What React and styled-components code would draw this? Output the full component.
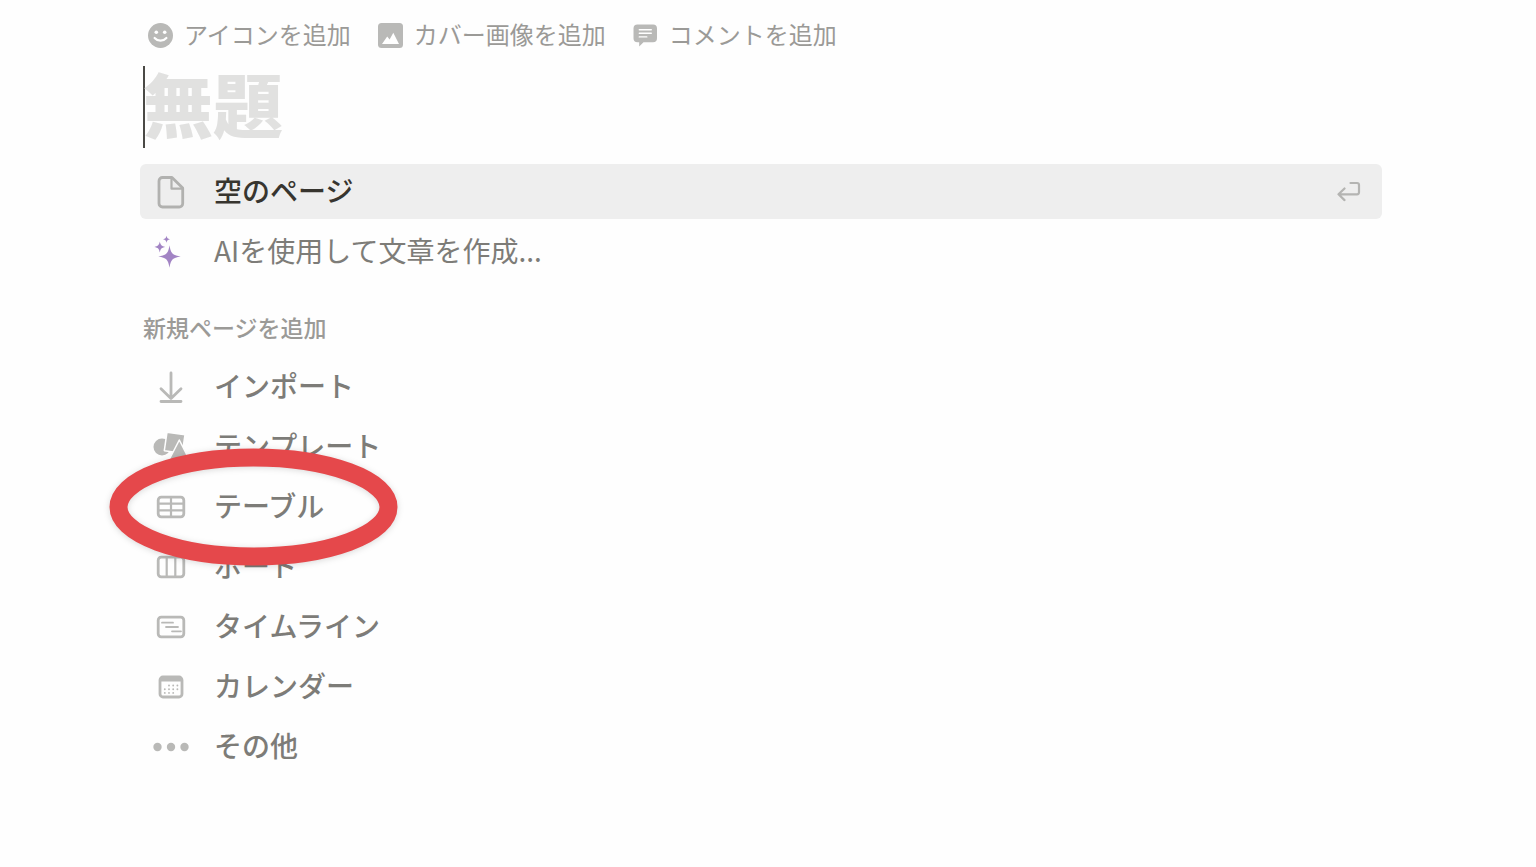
import React from 'react';
import styled, { createGlobalStyle } from 'styled-components';

const GlobalStyle = createGlobalStyle`
    * {
        box-sizing: border-box;
    }
    body {
        margin: 0;
        background: #fefefe;
        font-family: 'Noto Sans CJK JP', 'Noto Sans', sans-serif;
    }
    button {
        border: 0;
        margin: 0;
        background: none;
        font-family: inherit;
        text-align: left;
        cursor: pointer;
    }
    svg {
        display: block;
        flex: none;
    }
`

const Page = styled.main`
    padding: 16px 154px 40px 140px;
`

const Toolbar = styled.div`
    display: flex;
    gap: 27px;
    padding-left: 8px;
`

const ToolbarButton = styled.button`
    display: flex;
    align-items: center;
    gap: 11px;
    height: 38px;
    padding: 0;
    font-size: 24px;
    line-height: 32px;
    color: #9b9a97;
    white-space: nowrap;
`

const TitleField = styled.label`
    display: flex;
    height: 82px;
    margin: 12px 0 16px 3px;
`

const Caret = styled.span`
    flex: none;
    width: 2px;
    margin-right: -2px;
    background: #4a4945;
`

const TitleInput = styled.input`
    flex: 1;
    min-width: 0;
    height: 82px;
    padding: 0 0 10px;
    border: 0;
    outline: 0;
    background: none;
    font-family: inherit;
    font-size: 70px;
    font-weight: 900;
    line-height: 72px;
    color: #37352f;
    &::placeholder {
        color: #e1e1e0;
        opacity: 1;
    }
`

const List = styled.ul`
    display: flex;
    flex-direction: column;
    gap: 5px;
    margin: 0;
    padding: 0;
    list-style: none;
`

const Item = styled.li`
    position: relative;
`

const Row = styled.button`
    display: flex;
    align-items: center;
    gap: 25px;
    width: 100%;
    height: 55px;
    padding: 0 21px 0 13px;
    border-radius: 6px;
    background: ${props => props.$active ? '#eeeeee' : 'transparent'};
    font-size: 28px;
    font-weight: ${props => props.$light ? 400 : 500};
    line-height: 40px;
    color: ${props => props.$active ? '#37352f' : '#7d7c78'};
`

const Label = styled.span`
    flex: 1;
    padding-bottom: 4px;
`

const ToolbarLabel = styled.span`
    padding-bottom: 3px;
`

const Heading = styled.h2`
    margin: 30px 0 14px 3px;
    font-size: 23px;
    font-weight: 500;
    line-height: 36px;
    color: #9b9a97;
`

const Ring = styled.svg`
    position: absolute;
    top: -34px;
    left: -36px;
    z-index: 1;
    pointer-events: none;
    filter: drop-shadow(0 1px 3px rgba(0, 0, 0, 0.15));
`

const GREY = '#b9b9b7';

const Icon = ({ children, size = 36 }) => (
  <svg width={size} height={size} viewBox={`0 0 ${size} ${size}`} fill="none" stroke={GREY} strokeWidth="2.8" strokeLinecap="round" strokeLinejoin="round" aria-hidden="true">
    {children}
  </svg>
)

const SmileIcon = () => (
  <Icon size={25}>
    <circle cx="12.5" cy="12.5" r="12.5" fill={GREY} stroke="none"/>
    <circle cx="8.3" cy="9.2" r="1.8" fill="#fff" stroke="none"/>
    <circle cx="16.7" cy="9.2" r="1.8" fill="#fff" stroke="none"/>
    <path d="M6.6 15c3.2 3.6 8.6 3.6 11.8 0" stroke="#fff" strokeWidth="2.2"/>
  </Icon>
)

const CoverIcon = () => (
  <Icon size={25}>
    <rect width="25" height="25" rx="3.5" fill={GREY} stroke="none"/>
    <path d="M4 21l5.2-7.4 2.4 3L15.3 9.8L21 21z" fill="#fff" stroke="none"/>
  </Icon>
)

const CommentIcon = () => (
  <Icon size={25}>
    <path d="M4.5 1.5h15.5a4 4 0 0 1 4 4v9.8a4 4 0 0 1-4 4h-9.5l-4.3 4.2v-4.2H4.5a4 4 0 0 1-4-4V5.5a4 4 0 0 1 4-4z" fill={GREY} stroke="none"/>
    <path d="M6.3 6.7h12M6.3 10.3h12M6.3 13.9h7.5" stroke="#fff" strokeWidth="1.4"/>
  </Icon>
)

const PageIcon = () => (
  <Icon>
    <path d="M9.5 3.5H19L29.7 14v15.500a3.5 3.5 0 0 1-3.5 3.5H9.5A3.5 3.5 0 0 1 6 29.5V7a3.5 3.5 0 0 1 3.5-3.5z" stroke="#b1b1af"/>
    <path d="M18.5 4v10.7h11" stroke="#b1b1af" strokeWidth="2.2"/>
  </Icon>
)

const SparkleIcon = () => (
  <Icon>
    <g fill="#a284c4" stroke="none">
      <path d="M16.5 11.3C17.8 19.5 19.5 21.2 27.7 22.5C19.5 23.8 17.8 25.5 16.5 33.7C15.2 25.5 13.5 23.8 5.3 22.5C13.5 21.2 15.2 19.5 16.5 11.3z"/>
      <path d="M6.8 7.6C7.6 11.3 8.5 12.2 12.2 13C8.5 13.8 7.6 14.7 6.8 18.4C6 14.7 5.1 13.8 1.4 13C5.1 12.2 6 11.3 6.8 7.6z"/>
      <path d="M13.5 1.7C14.1 4.100 14.6 4.6 17 5.2C14.6 5.8 14.1 6.3 13.5 8.7C12.9 6.3 12.4 5.8 10 5.2C12.4 4.6 12.9 4.100 13.5 1.7z"/>
    </g>
  </Icon>
)

const EnterIcon = () => (
  <Icon size={24}>
    <path d="M13.5 3h6.5a2 2 0 0 1 2 2v7.3a2 2 0 0 1-2 2H1.5M7.500 8.5l-6 5.8 6 5.8" stroke="#b4b4b2" strokeWidth="2.2"/>
  </Icon>
)

const ImportIcon = () => (
  <Icon>
    <path d="M18 4v25M8 19.7l10 9.8 10-9.8M8 32.5h20"/>
  </Icon>
)

const TemplateIcon = () => (
  <Icon>
    <circle cx="9" cy="18" r="8.5" fill={GREY} stroke="none"/>
    <path d="M14 3.2l18 2.5-2.7 18.5-18-2.5z" fill={GREY} stroke="#fefefe" strokeWidth="1.5"/>
    <path d="M26.3 11L37 32H15.5z" fill={GREY} stroke="#fefefe" strokeWidth="1.5"/>
  </Icon>
)

const TableIcon = () => (
  <Icon>
    <rect x="5.2" y="8.2" width="25.6" height="19.6" rx="3"/>
    <path d="M18 8.5v19M5.5 14.7h25M5.5 21.3h25" strokeWidth="2.2"/>
  </Icon>
)

const BoardIcon = () => (
  <Icon>
    <rect x="5.2" y="8.2" width="25.6" height="19.6" rx="3"/>
    <path d="M13.7 8.5v19M22.3 8.5v19" strokeWidth="2.2"/>
  </Icon>
)

const TimelineIcon = () => (
  <Icon>
    <rect x="5.2" y="8.2" width="25.6" height="19.6" rx="3"/>
    <path d="M9 13.7h11M13 18h12M19 22.3h9" strokeWidth="1.8"/>
  </Icon>
)

const CalendarIcon = () => (
  <Icon>
    <rect x="7" y="8" width="22" height="20" rx="3"/>
    <path d="M7 8h22v4.5H7z" fill={GREY} stroke="none"/>
    <path d="M16 16.500h8.7M11.8 20.2h12.9M11.8 23.9h8.6" strokeWidth="1.9" strokeDasharray="0 4.2"/>
  </Icon>
)

const MoreIcon = () => (
  <Icon>
    <g fill={GREY} stroke="none">
      <circle cx="4.5" cy="18" r="4.2"/>
      <circle cx="18" cy="18" r="4.2"/>
      <circle cx="31.5" cy="18" r="4.2"/>
    </g>
  </Icon>
)

const newPageOptions = [
  { label: 'インポート', icon: ImportIcon },
  { label: 'テンプレート', icon: TemplateIcon },
  { label: 'テーブル', icon: TableIcon, circled: true },
  { label: 'ボード', icon: BoardIcon },
  { label: 'タイムライン', icon: TimelineIcon },
  { label: 'カレンダー', icon: CalendarIcon },
  { label: 'その他', icon: MoreIcon },
]

export default function App() {
  return (
    <Page>
      <GlobalStyle/>
      <Toolbar>
        <ToolbarButton><SmileIcon/><ToolbarLabel>アイコンを追加</ToolbarLabel></ToolbarButton>
        <ToolbarButton><CoverIcon/><ToolbarLabel>カバー画像を追加</ToolbarLabel></ToolbarButton>
        <ToolbarButton><CommentIcon/><ToolbarLabel>コメントを追加</ToolbarLabel></ToolbarButton>
      </Toolbar>

      <TitleField>
        <Caret/>
        <TitleInput type="text" placeholder="無題" aria-label="無題"/>
      </TitleField>

      <List>
        <Item>
          <Row $active><PageIcon/><Label>空のページ</Label><EnterIcon/></Row>
        </Item>
        <Item>
          <Row $light><SparkleIcon/><Label>AIを使用して文章を作成...</Label></Row>
        </Item>
      </List>

      <Heading>新規ページを追加</Heading>
      <List>
        {newPageOptions.map(({ label, icon: OptionIcon, circled }) => (
          <Item key={label}>
            <Row><OptionIcon/><Label>{label}</Label></Row>
            {circled && (
              <Ring width="300" height="124" viewBox="0 0 300 124" aria-hidden="true">
                <ellipse cx="149.5" cy="62" rx="135" ry="49.5" fill="none" stroke="#e5484b" strokeWidth="18"/>
              </Ring>
            )}
          </Item>
        ))}
      </List>
    </Page>
  )
}
